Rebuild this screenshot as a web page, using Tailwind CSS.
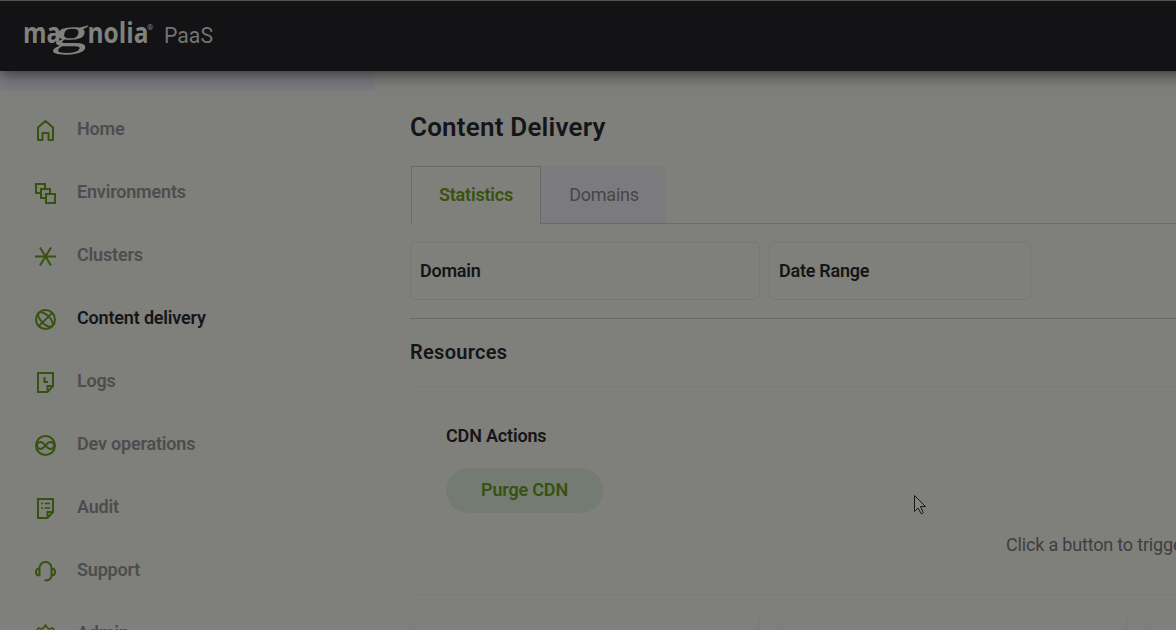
<!DOCTYPE html>
<html lang="en">
<head>
<meta charset="utf-8">
<title>Magnolia PaaS</title>
<script src="https://cdn.jsdelivr.net/npm/@tailwindcss/browser@4"></script>
</head>
<body class="relative flex h-[630px] w-[1176px] flex-col overflow-hidden bg-[#7f7f7c] font-[Roboto,sans-serif] text-[18px] leading-[21px] text-[#141518]">
<header class="relative z-10 -mr-6 h-[71px] shrink-0 border-t border-[#51524d] bg-[#131315] shadow-[0_2px_16px_rgba(0,0,0,0.65)]">
  <svg class="block" width="240" height="70" viewBox="0 1 240 70" fill="#81817e">
    <g font-family="Open Sans, sans-serif" font-weight="700" font-size="28.500">
      <text x="23" y="43" textLength="38" lengthAdjust="spacingAndGlyphs">ma</text>
      <text x="87.500" y="43" textLength="61" lengthAdjust="spacingAndGlyphs">nolia</text>
    </g>
    <text transform="translate(51 45.500) skewX(-13) scale(1.8 1)" font-family="Liberation Serif, serif" font-size="40">g</text>
    <text x="147" y="29.500" font-family="Roboto, sans-serif" font-size="8">®</text>
    <text x="164" y="42.500" textLength="49" lengthAdjust="spacingAndGlyphs" font-family="Roboto, sans-serif" font-size="22" fill="#747472">PaaS</text>
  </svg>
</header>
<div class="flex min-h-0 flex-1">
  <aside class="w-[375px] shrink-0 border-t-[20px] border-[#7b7b7f]">
    <nav class="flex flex-col pt-[6px] pl-[34px] font-semibold tracking-[-0.18px] text-[#4d4d4e]">
      <a class="flex h-[63px] items-center gap-5"><svg class="mt-1 size-[23px]" viewBox="0 0 23 23" fill="none" stroke="#37520f" stroke-width="2"><path d="M4 8.500 11.500 2 19 8.500V21h-4.500v-7h-6v7H4Z" stroke-linejoin="round"/></svg><span>Home</span></a>
      <a class="flex h-[63px] items-center gap-5"><svg class="mt-1 size-[23px]" viewBox="0 0 23 23" fill="none" stroke="#37520f" stroke-width="2"><path d="M7 11H2V2h9v5M12 16H7V7h9v5M12 12h9v9h-9Z"/></svg><span>Environments</span></a>
      <a class="flex h-[63px] items-center gap-5"><svg class="mt-1 size-[23px]" viewBox="0 0 23 23" fill="none" stroke="#37520f" stroke-width="2"><path d="M1 11.500h21M6 2.500l11 18M17 2.500l-11 18"/></svg><span>Clusters</span></a>
      <a class="flex h-[63px] items-center gap-5 text-[#141518]"><svg class="mt-1 size-[23px]" viewBox="0 0 23 23" fill="none" stroke="#37520f" stroke-width="2"><circle cx="11.500" cy="11.500" r="9.500"/><g transform="rotate(-45 11.500 11.500)" stroke-width="1.800"><ellipse cx="11.500" cy="11.500" rx="4.300" ry="9.500"/><path d="M2 11.500h19"/></g></svg><span>Content delivery</span></a>
      <a class="flex h-[63px] items-center gap-5"><svg class="mt-1 size-[23px]" viewBox="0 0 23 23" fill="none" stroke="#37520f" stroke-width="2"><path d="M4 2h15v13l-5.500 6H4ZM13.500 21v-6H19M10.500 6v5h3.500"/></svg><span>Logs</span></a>
      <a class="flex h-[63px] items-center gap-5"><svg class="mt-1 size-[23px]" viewBox="0 0 23 23" fill="none" stroke="#37520f" stroke-width="2"><circle cx="11.500" cy="11.500" r="9.500"/><path d="M11.500 11.500C9.500 9 8.500 8 6.500 8a3.500 3.500 0 0 0 0 7c2 0 3-1 5-3.500s3-3.500 5-3.500a3.500 3.500 0 0 1 0 7c-2 0-3-1-5-3.500Z"/></svg><span>Dev operations</span></a>
      <a class="flex h-[63px] items-center gap-5"><svg class="mt-1 size-[23px]" viewBox="0 0 23 23" fill="none" stroke="#37520f" stroke-width="2"><path d="M4 2h15v13l-5.500 6H4ZM13.500 21v-6H19"/><path d="M7 6.500h2M10.500 6.500H16M7 11h2M10.500 11H16" stroke-width="1.700"/></svg><span>Audit</span></a>
      <a class="flex h-[63px] items-center gap-5"><svg class="mt-1 size-[23px]" viewBox="0 0 23 23" fill="none" stroke="#37520f" stroke-width="2"><path d="M5.500 15.500V8a6 6 0 0 1 12 0v7.500c0 3-1.500 5-7 5M5.500 8.500C3 8.500 2 10 2 12s1 3.500 3.500 3.500M17.500 8.500c2.500 0 3.500 1.500 3.500 3.500s-1 3.500-3.500 3.500"/></svg><span>Support</span></a>
      <a class="flex h-[63px] items-center gap-5"><svg class="mt-1 size-[23px]" viewBox="0 0 23 23" fill="none" stroke="#37520f" stroke-width="1.500"><path d="m9.500 5 2-3 2 3 2 1 3-1 1.500 2-2 2.500v3l2 2.500-1.500 2-3-1-2 1-1 3h-2l-1-3-2-1-3 1L3 15l2-2.500v-3L3 7l1.500-2 3 1Z"/><circle cx="11.500" cy="11.500" r="3"/></svg><span>Admin</span></a>
    </nav>
  </aside>
  <main class="flex min-w-0 flex-1 flex-col overflow-hidden pt-[41px] pl-[35px]">
    <h1 class="text-[26px] leading-[30px] font-semibold tracking-[0.2px]">Content Delivery</h1>
    <div class="mt-6 flex h-[58px] shrink-0 items-stretch">
      <div class="ml-px flex w-[130px] items-center justify-center border border-b-0 border-[#6a6a6e] pb-0.5 font-semibold tracking-[-0.18px] text-[#37520f]">Statistics</div>
      <div class="flex w-[125px] items-center justify-center border-b border-[#6a6a6a] bg-[#7b7b7e] pl-px tracking-[-0.22px] text-[#464648]">Domains</div>
      <div class="flex-1 border-b border-[#6a6a6a]"></div>
    </div>
    <div class="mt-[18px] flex shrink-0 gap-[9px] font-semibold tracking-[-0.25px]">
      <div class="flex h-[58px] w-[350px] items-center rounded-[5px] border border-[#777779] pb-0.5 pl-[9px]">Domain</div>
      <div class="flex h-[58px] w-[262px] items-center rounded-[5px] border border-[#777779] pb-0.5 pl-[9px]">Date Range</div>
    </div>
    <div class="mt-[18px] h-px shrink-0 bg-[#6a6a6a]"></div>
    <h2 class="mt-[21px] text-[20px] leading-6 font-semibold tracking-[0.3px]">Resources</h2>
    <section class="mt-[22px] flex h-[209px] shrink-0 flex-col rounded-tl-[5px] border border-r-0 border-[#7b7b7b] pt-[38px] pl-[35px]">
      <h3 class="font-semibold tracking-[-0.18px]">CDN Actions</h3>
      <button class="mt-[22px] h-[45px] w-[157px] rounded-full bg-[#747b72] pb-0.5 font-semibold tracking-[-0.18px] text-[#37520f]">Purge CDN</button>
      <p class="mt-[21px] ml-[560px] whitespace-nowrap tracking-[-0.18px] text-[#3e3e40]">Click a button to trigger an action</p>
    </section>
    <div class="mt-[17px] flex min-h-0 flex-1 gap-[18px]">
      <div class="w-[350px] shrink-0 rounded-t-[5px] border border-b-0 border-[#7b7b7d]"></div>
      <div class="w-[350px] shrink-0 rounded-t-[5px] border border-b-0 border-[#7b7b7d]"></div>
      <div class="flex-1 rounded-tl-[5px] border border-r-0 border-b-0 border-[#7b7b7d]"></div>
    </div>
  </main>
</div>
<svg class="absolute top-[494px] left-[913px]" width="15" height="22" viewBox="0 0 15 22" fill="#858582" stroke="#171719"><path d="M1.500 1.500v16l3.500-3.500 3 5.500c1 .500 2.500 0 2-1.500L7.500 12.500h5Z"/></svg>
</body>
</html>
